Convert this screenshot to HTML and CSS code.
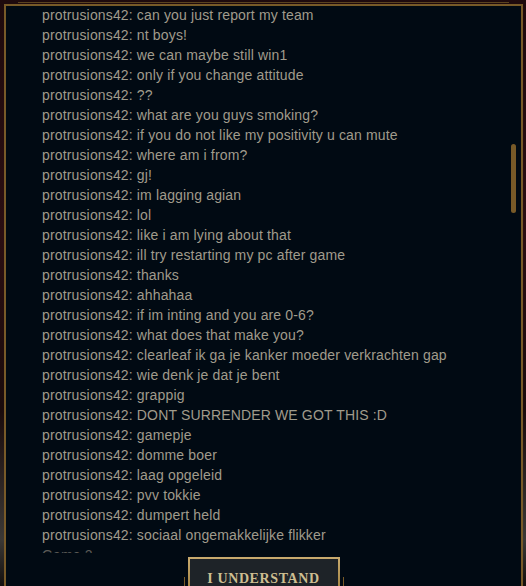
FILE: index.html
```html
<!DOCTYPE html>
<html lang="en">
<head>
    <meta charset="UTF-8" />
    <title>Chat log</title>
    <link rel="stylesheet" href="styles.css">
</head>
<body>
    <div class="modal">
        <div class="log">
            <div class="line">protrusions42: can you just report my team</div>
            <div class="line">protrusions42: nt boys!</div>
            <div class="line">protrusions42: we can maybe still win1</div>
            <div class="line">protrusions42: only if you change attitude</div>
            <div class="line">protrusions42: ??</div>
            <div class="line">protrusions42: what are you guys smoking?</div>
            <div class="line">protrusions42: if you do not like my positivity u can mute</div>
            <div class="line">protrusions42: where am i from?</div>
            <div class="line">protrusions42: gj!</div>
            <div class="line">protrusions42: im lagging agian</div>
            <div class="line">protrusions42: lol</div>
            <div class="line">protrusions42: like i am lying about that</div>
            <div class="line">protrusions42: ill try restarting my pc after game</div>
            <div class="line">protrusions42: thanks</div>
            <div class="line">protrusions42: ahhahaa</div>
            <div class="line">protrusions42: if im inting and you are 0-6?</div>
            <div class="line">protrusions42: what does that make you?</div>
            <div class="line">protrusions42: clearleaf ik ga je kanker moeder verkrachten gap</div>
            <div class="line">protrusions42: wie denk je dat je bent</div>
            <div class="line">protrusions42: grappig</div>
            <div class="line">protrusions42: DONT SURRENDER WE GOT THIS :D</div>
            <div class="line">protrusions42: gamepje</div>
            <div class="line">protrusions42: domme boer</div>
            <div class="line">protrusions42: laag opgeleid</div>
            <div class="line">protrusions42: pvv tokkie</div>
            <div class="line">protrusions42: dumpert held</div>
            <div class="line">protrusions42: sociaal ongemakkelijke flikker</div>
            <div class="line game">Game 2</div>
        </div>
        <div class="scroll-thumb"></div>
        <div class="footer">
            <div class="btn-wrap">
                <button class="btn">I UNDERSTAND</button>
            </div>
        </div>
    </div>
</body>
</html>
```

FILE: styles.css
```css
body {
    margin: 0;
    height: 586px;
    overflow: hidden;
    background: linear-gradient(to bottom, #1e0a0d 0, #2a0e12 40%, #1a0b0c 70%, #3b3835 92%, #14100e 100%);
    font-family: 'Liberation Sans', Arial, sans-serif;
}

.modal {
    position: relative;
    height: 582px;
    margin: 4px 3px 0 4px;
    box-sizing: border-box;
    border: 2px solid #785a28;
    border-bottom: none;
    background-color: #010a13;
}

    .modal::before {
        content: "";
        position: absolute;
        top: -4px;
        left: 12px;
        right: 12px;
        height: 1px;
        background-color: #5b4320;
    }

.log {
    height: 547px;
    overflow: hidden;
    padding-left: 36px;
}

.line {
    font-size: 14px;
    line-height: 20px;
    letter-spacing: 0.15px;
    color: #a09b8c;
    white-space: nowrap;
}

    .line:first-child {
        margin-top: -1px;
    }

    .line.game {
        color: #5c5b57;
    }

.scroll-thumb {
    position: absolute;
    top: 138px;
    right: 5px;
    width: 5px;
    height: 69px;
    border-radius: 3px;
    background-color: #785a28;
}

.footer {
    display: flex;
    justify-content: center;
    padding-top: 4px;
}

.btn-wrap {
    position: relative;
}

    .btn-wrap::before,
    .btn-wrap::after {
        content: "";
        position: absolute;
        top: 20px;
        width: 1px;
        height: 12px;
        background-color: #785a28;
    }

    .btn-wrap::before {
        left: -4px;
    }

    .btn-wrap::after {
        right: -4px;
    }

.btn {
    display: block;
    width: 152px;
    height: 36px;
    padding: 7px 0 0;
    box-sizing: border-box;
    border: 2px solid;
    border-image: linear-gradient(to bottom, #c8aa6e, #a0803e) 1;
    background-color: #1e2328;
    color: #cdbe91;
    font-family: 'Liberation Serif', 'Times New Roman', serif;
    font-weight: 700;
    font-size: 14px;
    line-height: 16px;
    letter-spacing: 0.6px;
    text-align: center;
    vertical-align: top;
}
```
